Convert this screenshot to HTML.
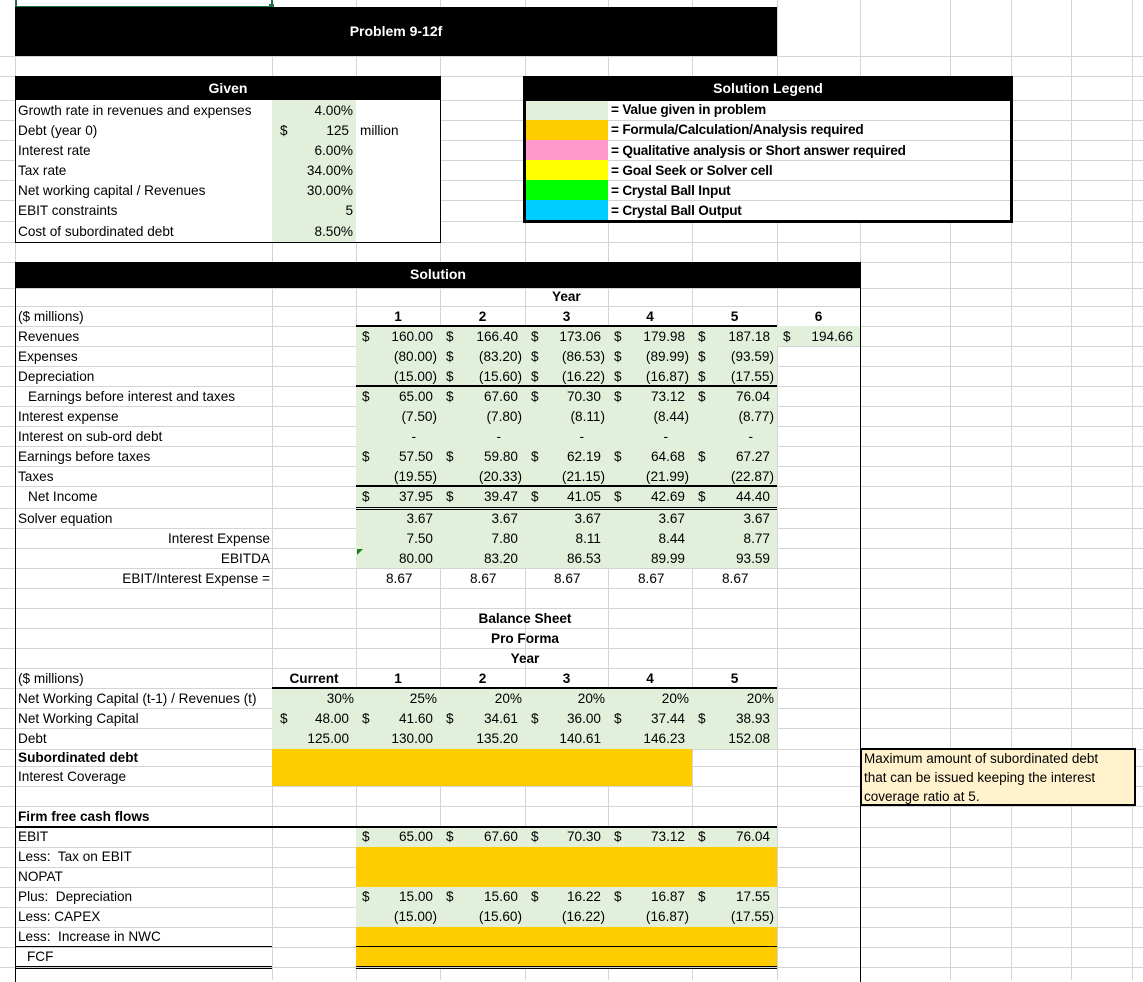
<!DOCTYPE html>
<html><head><meta charset="utf-8"><style>
*{margin:0;padding:0;box-sizing:border-box}
body{width:1143px;height:980px;overflow:hidden;background:#fff;position:relative;font-family:"Liberation Sans",Arial,sans-serif;font-size:13.6px;color:#000}
div{position:absolute;white-space:nowrap;line-height:20px;height:20px}
.r{text-align:right}
.c{text-align:center}
.b{font-weight:bold}
.bk{background:#000;color:#fff;font-weight:bold;font-size:14px;text-align:center}
.g{background:#E2EFDA}
.o{background:#FFCC00}
.lg{font-family:"Liberation Sans Narrow","Liberation Sans",sans-serif;font-weight:bold;font-size:13.6px;letter-spacing:-0.2px}
.hl{height:0;border-top:1px solid #000}
</style></head><body>
<svg width="1143" height="980" style="position:absolute;left:0;top:0" stroke="#d4d4d4" stroke-width="1">
<g>
<line x1="0" x2="1143" y1="56.5" y2="56.5"/><line x1="0" x2="1143" y1="76.5" y2="76.5"/>
<line x1="0" x2="1143" y1="100.5" y2="100.5"/><line x1="0" x2="1143" y1="120.5" y2="120.5"/><line x1="0" x2="1143" y1="140.5" y2="140.5"/><line x1="0" x2="1143" y1="160.5" y2="160.5"/><line x1="0" x2="1143" y1="180.5" y2="180.5"/><line x1="0" x2="1143" y1="200.5" y2="200.5"/><line x1="0" x2="1143" y1="221.5" y2="221.5"/><line x1="0" x2="1143" y1="242.5" y2="242.5"/><line x1="0" x2="1143" y1="262.5" y2="262.5"/><line x1="0" x2="1143" y1="288.5" y2="288.5"/><line x1="0" x2="1143" y1="306.5" y2="306.5"/><line x1="0" x2="1143" y1="326.5" y2="326.5"/><line x1="0" x2="1143" y1="346.5" y2="346.5"/><line x1="0" x2="1143" y1="366.5" y2="366.5"/><line x1="0" x2="1143" y1="386.5" y2="386.5"/><line x1="0" x2="1143" y1="406.5" y2="406.5"/><line x1="0" x2="1143" y1="426.5" y2="426.5"/><line x1="0" x2="1143" y1="446.5" y2="446.5"/><line x1="0" x2="1143" y1="466.5" y2="466.5"/><line x1="0" x2="1143" y1="486.5" y2="486.5"/><line x1="0" x2="1143" y1="508.5" y2="508.5"/><line x1="0" x2="1143" y1="528.5" y2="528.5"/><line x1="0" x2="1143" y1="548.5" y2="548.5"/><line x1="0" x2="1143" y1="568.5" y2="568.5"/><line x1="0" x2="1143" y1="588.5" y2="588.5"/><line x1="0" x2="1143" y1="608.5" y2="608.5"/><line x1="0" x2="1143" y1="628.5" y2="628.5"/><line x1="0" x2="1143" y1="648.5" y2="648.5"/><line x1="0" x2="1143" y1="668.5" y2="668.5"/><line x1="0" x2="1143" y1="688.5" y2="688.5"/><line x1="0" x2="1143" y1="708.5" y2="708.5"/><line x1="0" x2="1143" y1="728.5" y2="728.5"/><line x1="0" x2="1143" y1="749.5" y2="749.5"/><line x1="0" x2="1143" y1="766.5" y2="766.5"/><line x1="0" x2="1143" y1="786.5" y2="786.5"/><line x1="0" x2="1143" y1="806.5" y2="806.5"/><line x1="0" x2="1143" y1="827.5" y2="827.5"/><line x1="0" x2="1143" y1="847.5" y2="847.5"/><line x1="0" x2="1143" y1="867.5" y2="867.5"/><line x1="0" x2="1143" y1="887.5" y2="887.5"/><line x1="0" x2="1143" y1="907.5" y2="907.5"/><line x1="0" x2="1143" y1="927.5" y2="927.5"/><line x1="0" x2="1143" y1="947.5" y2="947.5"/><line x1="0" x2="1143" y1="967.5" y2="967.5"/>
</g>
<g>
<line y1="0" y2="980" x1="15.5" x2="15.5"/><line y1="0" y2="980" x1="272.5" x2="272.5"/><line y1="0" y2="980" x1="356.5" x2="356.5"/><line y1="0" y2="980" x1="440.5" x2="440.5"/><line y1="0" y2="980" x1="525.5" x2="525.5"/><line y1="0" y2="980" x1="608.5" x2="608.5"/><line y1="0" y2="980" x1="692.5" x2="692.5"/><line y1="0" y2="980" x1="777.5" x2="777.5"/><line y1="0" y2="980" x1="860.5" x2="860.5"/><line y1="0" y2="980" x1="950.5" x2="950.5"/><line y1="0" y2="980" x1="1011.5" x2="1011.5"/><line y1="0" y2="980" x1="1071.5" x2="1071.5"/><line y1="0" y2="980" x1="1132.5" x2="1132.5"/>
</g>
</svg>

<div style="left:15px;top:-2px;width:258px;height:10px;border:2px solid #217346;background:#fff"></div>
<div style="left:269px;top:4px;width:5px;height:5px;background:#217346"></div>

<div class="bk" style="left:15px;top:7px;width:762px;height:49px;line-height:49px">Problem 9-12f</div>

<div style="left:16px;top:100px;width:424px;height:142px;background:#fff"></div>
<div class="g" style="left:272px;top:100px;width:84px;height:142px"></div>
<div style="left:15px;top:76px;width:426px;height:167px;border:1px solid #000"></div>
<div class="bk" style="left:15px;top:76px;width:426px;height:24px;line-height:24px">Given</div>
<div style="left:18px;top:101px">Growth rate in revenues and expenses</div>
<div style="left:18px;top:121px">Debt (year 0)</div>
<div style="left:18px;top:141px">Interest rate</div>
<div style="left:18px;top:161px">Tax rate</div>
<div style="left:18px;top:181px">Net working capital / Revenues</div>
<div style="left:18px;top:201px">EBIT constraints</div>
<div style="left:18px;top:222px">Cost of subordinated debt</div>
<div class="r" style="left:272px;width:81px;top:101px">4.00%</div>
<div style="left:280px;top:121px">$</div>
<div class="r" style="left:272px;width:77px;top:121px">125</div>
<div style="left:360px;top:121px">million</div>
<div class="r" style="left:272px;width:81px;top:141px">6.00%</div>
<div class="r" style="left:272px;width:81px;top:161px">34.00%</div>
<div class="r" style="left:272px;width:81px;top:181px">30.00%</div>
<div class="r" style="left:272px;width:81px;top:201px">5</div>
<div class="r" style="left:272px;width:81px;top:222px">8.50%</div>

<div style="left:525px;top:100px;width:486px;height:121px;background:#fff"></div>
<div style="left:525px;top:100px;width:83px;height:20px;background:#E2EFDA"></div>
<div style="left:525px;top:120px;width:83px;height:20px;background:#FFCC00"></div>
<div style="left:525px;top:140px;width:83px;height:20px;background:#FF99CC"></div>
<div style="left:525px;top:160px;width:83px;height:20px;background:#FFFF00"></div>
<div style="left:525px;top:180px;width:83px;height:20px;background:#00FF00"></div>
<div style="left:525px;top:200px;width:83px;height:21px;background:#00CCFF"></div>
<div style="left:608px;top:120px;width:403px;height:1px;background:#d4d4d4"></div>
<div style="left:608px;top:140px;width:403px;height:1px;background:#d4d4d4"></div>
<div style="left:608px;top:160px;width:403px;height:1px;background:#d4d4d4"></div>
<div style="left:608px;top:180px;width:403px;height:1px;background:#d4d4d4"></div>
<div style="left:608px;top:200px;width:403px;height:1px;background:#d4d4d4"></div>
<div style="left:523px;top:76px;width:490px;height:147px;border:3px solid #000"></div>
<div class="bk" style="left:523px;top:76px;width:490px;height:25px;line-height:25px">Solution Legend</div>
<div class="lg" style="left:611px;top:100px">= Value given in problem</div>
<div class="lg" style="left:611px;top:120px">= Formula/Calculation/Analysis required</div>
<div class="lg" style="left:611px;top:141px">= Qualitative analysis or Short answer required</div>
<div class="lg" style="left:611px;top:161px">= Goal Seek or Solver cell</div>
<div class="lg" style="left:611px;top:181px">= Crystal Ball Input</div>
<div class="lg" style="left:611px;top:201px">= Crystal Ball Output</div>

<div style="left:15px;top:262px;width:846px;height:720px;border-left:1px solid #000;border-right:1px solid #000"></div>
<div class="bk" style="left:15px;top:262px;width:846px;height:26px;line-height:24px;text-align:left;padding-left:395px">Solution</div>

<div class="b" style="left:552px;top:288px;line-height:18px">Year</div>
<div class="g" style="left:356px;top:326px;width:421px;height:242px"></div>
<div class="g" style="left:777px;top:326px;width:83px;height:20px"></div>
<div class="hl" style="left:356px;top:325px;width:421px;border-top-width:2px"></div>
<div class="hl" style="left:356px;top:385px;width:421px;border-top-width:2px"></div>
<div class="hl" style="left:356px;top:485px;width:421px;border-top-width:2px"></div>
<div class="hl" style="left:356px;top:507px;width:421px;border-top:3px double #000"></div>
<div style="left:357px;top:549px;width:0;height:0;border-top:6px solid #1e7e1e;border-right:6px solid transparent"></div>

<div class="b c" style="left:356px;top:307px;width:84px">1</div>
<div class="b c" style="left:440px;top:307px;width:85px">2</div>
<div class="b c" style="left:525px;top:307px;width:83px">3</div>
<div class="b c" style="left:608px;top:307px;width:84px">4</div>
<div class="b c" style="left:692px;top:307px;width:85px">5</div>
<div class="b c" style="left:777px;top:307px;width:83px">6</div>

<div style="left:18px;top:307px">($ millions)</div>
<div style="left:18px;top:327px">Revenues</div>
<div style="left:18px;top:347px">Expenses</div>
<div style="left:18px;top:367px">Depreciation</div>
<div style="left:28px;top:387px">Earnings before interest and taxes</div>
<div style="left:18px;top:407px">Interest expense</div>
<div style="left:18px;top:427px">Interest on sub-ord debt</div>
<div style="left:18px;top:447px">Earnings before taxes</div>
<div style="left:18px;top:467px">Taxes</div>
<div style="left:28px;top:487px">Net Income</div>
<div style="left:18px;top:509px">Solver equation</div>
<div class="r" style="left:16px;width:254px;top:529px">Interest Expense</div>
<div class="r" style="left:16px;width:254px;top:549px">EBITDA</div>
<div class="r" style="left:16px;width:254px;top:569px">EBIT/Interest Expense =</div>

<div style="left:362px;top:327px">$</div><div class="r" style="left:356px;width:77px;top:327px">160.00</div>
<div style="left:446px;top:327px">$</div><div class="r" style="left:440px;width:78px;top:327px">166.40</div>
<div style="left:531px;top:327px">$</div><div class="r" style="left:525px;width:76px;top:327px">173.06</div>
<div style="left:614px;top:327px">$</div><div class="r" style="left:608px;width:77px;top:327px">179.98</div>
<div style="left:698px;top:327px">$</div><div class="r" style="left:692px;width:78px;top:327px">187.18</div>
<div style="left:783px;top:327px">$</div><div class="r" style="left:777px;width:76px;top:327px">194.66</div>
<div class="r" style="left:356px;width:81px;top:347px">(80.00)</div>
<div style="left:446px;top:347px">$</div><div class="r" style="left:440px;width:82px;top:347px">(83.20)</div>
<div style="left:531px;top:347px">$</div><div class="r" style="left:525px;width:80px;top:347px">(86.53)</div>
<div style="left:614px;top:347px">$</div><div class="r" style="left:608px;width:81px;top:347px">(89.99)</div>
<div style="left:698px;top:347px">$</div><div class="r" style="left:692px;width:82px;top:347px">(93.59)</div>
<div class="r" style="left:356px;width:81px;top:367px">(15.00)</div>
<div style="left:446px;top:367px">$</div><div class="r" style="left:440px;width:82px;top:367px">(15.60)</div>
<div style="left:531px;top:367px">$</div><div class="r" style="left:525px;width:80px;top:367px">(16.22)</div>
<div style="left:614px;top:367px">$</div><div class="r" style="left:608px;width:81px;top:367px">(16.87)</div>
<div style="left:698px;top:367px">$</div><div class="r" style="left:692px;width:82px;top:367px">(17.55)</div>
<div style="left:362px;top:387px">$</div><div class="r" style="left:356px;width:77px;top:387px">65.00</div>
<div style="left:446px;top:387px">$</div><div class="r" style="left:440px;width:78px;top:387px">67.60</div>
<div style="left:531px;top:387px">$</div><div class="r" style="left:525px;width:76px;top:387px">70.30</div>
<div style="left:614px;top:387px">$</div><div class="r" style="left:608px;width:77px;top:387px">73.12</div>
<div style="left:698px;top:387px">$</div><div class="r" style="left:692px;width:78px;top:387px">76.04</div>
<div class="r" style="left:356px;width:81px;top:407px">(7.50)</div>
<div class="r" style="left:440px;width:82px;top:407px">(7.80)</div>
<div class="r" style="left:525px;width:80px;top:407px">(8.11)</div>
<div class="r" style="left:608px;width:81px;top:407px">(8.44)</div>
<div class="r" style="left:692px;width:82px;top:407px">(8.77)</div>
<div class="r" style="left:356px;width:60px;top:427px">-</div>
<div class="r" style="left:440px;width:61px;top:427px">-</div>
<div class="r" style="left:525px;width:59px;top:427px">-</div>
<div class="r" style="left:608px;width:60px;top:427px">-</div>
<div class="r" style="left:692px;width:61px;top:427px">-</div>
<div style="left:362px;top:447px">$</div><div class="r" style="left:356px;width:77px;top:447px">57.50</div>
<div style="left:446px;top:447px">$</div><div class="r" style="left:440px;width:78px;top:447px">59.80</div>
<div style="left:531px;top:447px">$</div><div class="r" style="left:525px;width:76px;top:447px">62.19</div>
<div style="left:614px;top:447px">$</div><div class="r" style="left:608px;width:77px;top:447px">64.68</div>
<div style="left:698px;top:447px">$</div><div class="r" style="left:692px;width:78px;top:447px">67.27</div>
<div class="r" style="left:356px;width:81px;top:467px">(19.55)</div>
<div class="r" style="left:440px;width:82px;top:467px">(20.33)</div>
<div class="r" style="left:525px;width:80px;top:467px">(21.15)</div>
<div class="r" style="left:608px;width:81px;top:467px">(21.99)</div>
<div class="r" style="left:692px;width:82px;top:467px">(22.87)</div>
<div style="left:362px;top:487px">$</div><div class="r" style="left:356px;width:77px;top:487px">37.95</div>
<div style="left:446px;top:487px">$</div><div class="r" style="left:440px;width:78px;top:487px">39.47</div>
<div style="left:531px;top:487px">$</div><div class="r" style="left:525px;width:76px;top:487px">41.05</div>
<div style="left:614px;top:487px">$</div><div class="r" style="left:608px;width:77px;top:487px">42.69</div>
<div style="left:698px;top:487px">$</div><div class="r" style="left:692px;width:78px;top:487px">44.40</div>
<div class="r" style="left:356px;width:77px;top:509px">3.67</div>
<div class="r" style="left:440px;width:78px;top:509px">3.67</div>
<div class="r" style="left:525px;width:76px;top:509px">3.67</div>
<div class="r" style="left:608px;width:77px;top:509px">3.67</div>
<div class="r" style="left:692px;width:78px;top:509px">3.67</div>
<div class="r" style="left:356px;width:77px;top:529px">7.50</div>
<div class="r" style="left:440px;width:78px;top:529px">7.80</div>
<div class="r" style="left:525px;width:76px;top:529px">8.11</div>
<div class="r" style="left:608px;width:77px;top:529px">8.44</div>
<div class="r" style="left:692px;width:78px;top:529px">8.77</div>
<div class="r" style="left:356px;width:77px;top:549px">80.00</div>
<div class="r" style="left:440px;width:78px;top:549px">83.20</div>
<div class="r" style="left:525px;width:76px;top:549px">86.53</div>
<div class="r" style="left:608px;width:77px;top:549px">89.99</div>
<div class="r" style="left:692px;width:78px;top:549px">93.59</div>
<div style="left:386px;top:569px">8.67</div>
<div style="left:470px;top:569px">8.67</div>
<div style="left:554px;top:569px">8.67</div>
<div style="left:638px;top:569px">8.67</div>
<div style="left:722px;top:569px">8.67</div>

<div class="b c" style="left:440px;width:170px;top:609px">Balance Sheet</div>
<div class="b c" style="left:440px;width:170px;top:629px">Pro Forma</div>
<div class="b c" style="left:440px;width:170px;top:649px">Year</div>
<div class="b c" style="left:272px;width:84px;top:669px">Current</div>
<div class="b c" style="left:356px;width:84px;top:669px">1</div>
<div class="b c" style="left:440px;width:85px;top:669px">2</div>
<div class="b c" style="left:525px;width:83px;top:669px">3</div>
<div class="b c" style="left:608px;width:84px;top:669px">4</div>
<div class="b c" style="left:692px;width:85px;top:669px">5</div>
<div class="g" style="left:272px;top:688px;width:505px;height:61px"></div>
<div class="o" style="left:272px;top:749px;width:420px;height:37px"></div>
<div class="hl" style="left:272px;top:687px;width:505px;border-top-width:2px"></div>

<div style="left:18px;top:669px">($ millions)</div>
<div style="left:18px;top:689px">Net Working Capital (t-1) / Revenues (t)</div>
<div style="left:18px;top:709px">Net Working Capital</div>
<div style="left:18px;top:729px">Debt</div>
<div class="b" style="left:18px;top:748px">Subordinated debt</div>
<div style="left:18px;top:767px">Interest Coverage</div>

<div class="r" style="left:272px;width:82px;top:689px">30%</div>
<div class="r" style="left:356px;width:81px;top:689px">25%</div>
<div class="r" style="left:440px;width:82px;top:689px">20%</div>
<div class="r" style="left:525px;width:80px;top:689px">20%</div>
<div class="r" style="left:608px;width:81px;top:689px">20%</div>
<div class="r" style="left:692px;width:82px;top:689px">20%</div>

<div style="left:280px;top:709px">$</div><div class="r" style="left:272px;width:77px;top:709px">48.00</div>
<div style="left:362px;top:709px">$</div><div class="r" style="left:356px;width:77px;top:709px">41.60</div>
<div style="left:446px;top:709px">$</div><div class="r" style="left:440px;width:78px;top:709px">34.61</div>
<div style="left:531px;top:709px">$</div><div class="r" style="left:525px;width:76px;top:709px">36.00</div>
<div style="left:614px;top:709px">$</div><div class="r" style="left:608px;width:77px;top:709px">37.44</div>
<div style="left:698px;top:709px">$</div><div class="r" style="left:692px;width:78px;top:709px">38.93</div>

<div class="r" style="left:272px;width:77px;top:729px">125.00</div>
<div class="r" style="left:356px;width:77px;top:729px">130.00</div>
<div class="r" style="left:440px;width:78px;top:729px">135.20</div>
<div class="r" style="left:525px;width:76px;top:729px">140.61</div>
<div class="r" style="left:608px;width:77px;top:729px">146.23</div>
<div class="r" style="left:692px;width:78px;top:729px">152.08</div>

<div style="left:860px;top:748px;width:276px;height:58px;background:#FFF2CC;border:2px solid #000"></div>
<div style="left:864px;top:749px;font-size:13.5px;line-height:19px;height:19px">Maximum amount of subordinated debt</div>
<div style="left:864px;top:768px;font-size:13.5px;line-height:19px;height:19px">that can be issued keeping the interest</div>
<div style="left:864px;top:787px;font-size:13.5px;line-height:19px;height:19px">coverage ratio at 5.</div>

<div class="g" style="left:356px;top:827px;width:421px;height:20px"></div>
<div class="o" style="left:356px;top:847px;width:421px;height:40px"></div>
<div class="g" style="left:356px;top:887px;width:421px;height:40px"></div>
<div class="o" style="left:356px;top:927px;width:421px;height:40px"></div>
<div class="hl" style="left:15px;top:826px;width:762px;border-top-width:2px"></div>
<div class="hl" style="left:15px;top:946px;width:257px"></div>
<div class="hl" style="left:356px;top:946px;width:421px"></div>
<div class="hl" style="left:15px;top:966px;width:257px;border-top:3px double #000"></div>
<div class="hl" style="left:356px;top:966px;width:421px;border-top:3px double #000"></div>

<div class="b" style="left:18px;top:807px">Firm free cash flows</div>
<div style="left:18px;top:827px">EBIT</div>
<div style="left:18px;top:847px">Less:&nbsp; Tax on EBIT</div>
<div style="left:18px;top:867px">NOPAT</div>
<div style="left:18px;top:887px">Plus:&nbsp; Depreciation</div>
<div style="left:18px;top:907px">Less: CAPEX</div>
<div style="left:18px;top:927px">Less:&nbsp; Increase in NWC</div>
<div style="left:27px;top:947px">FCF</div>

<div style="left:362px;top:827px">$</div><div class="r" style="left:356px;width:77px;top:827px">65.00</div>
<div style="left:446px;top:827px">$</div><div class="r" style="left:440px;width:78px;top:827px">67.60</div>
<div style="left:531px;top:827px">$</div><div class="r" style="left:525px;width:76px;top:827px">70.30</div>
<div style="left:614px;top:827px">$</div><div class="r" style="left:608px;width:77px;top:827px">73.12</div>
<div style="left:698px;top:827px">$</div><div class="r" style="left:692px;width:78px;top:827px">76.04</div>

<div style="left:362px;top:887px">$</div><div class="r" style="left:356px;width:77px;top:887px">15.00</div>
<div style="left:446px;top:887px">$</div><div class="r" style="left:440px;width:78px;top:887px">15.60</div>
<div style="left:531px;top:887px">$</div><div class="r" style="left:525px;width:76px;top:887px">16.22</div>
<div style="left:614px;top:887px">$</div><div class="r" style="left:608px;width:77px;top:887px">16.87</div>
<div style="left:698px;top:887px">$</div><div class="r" style="left:692px;width:78px;top:887px">17.55</div>

<div class="r" style="left:356px;width:81px;top:907px">(15.00)</div>
<div class="r" style="left:440px;width:82px;top:907px">(15.60)</div>
<div class="r" style="left:525px;width:80px;top:907px">(16.22)</div>
<div class="r" style="left:608px;width:81px;top:907px">(16.87)</div>
<div class="r" style="left:692px;width:82px;top:907px">(17.55)</div>
</body></html>
